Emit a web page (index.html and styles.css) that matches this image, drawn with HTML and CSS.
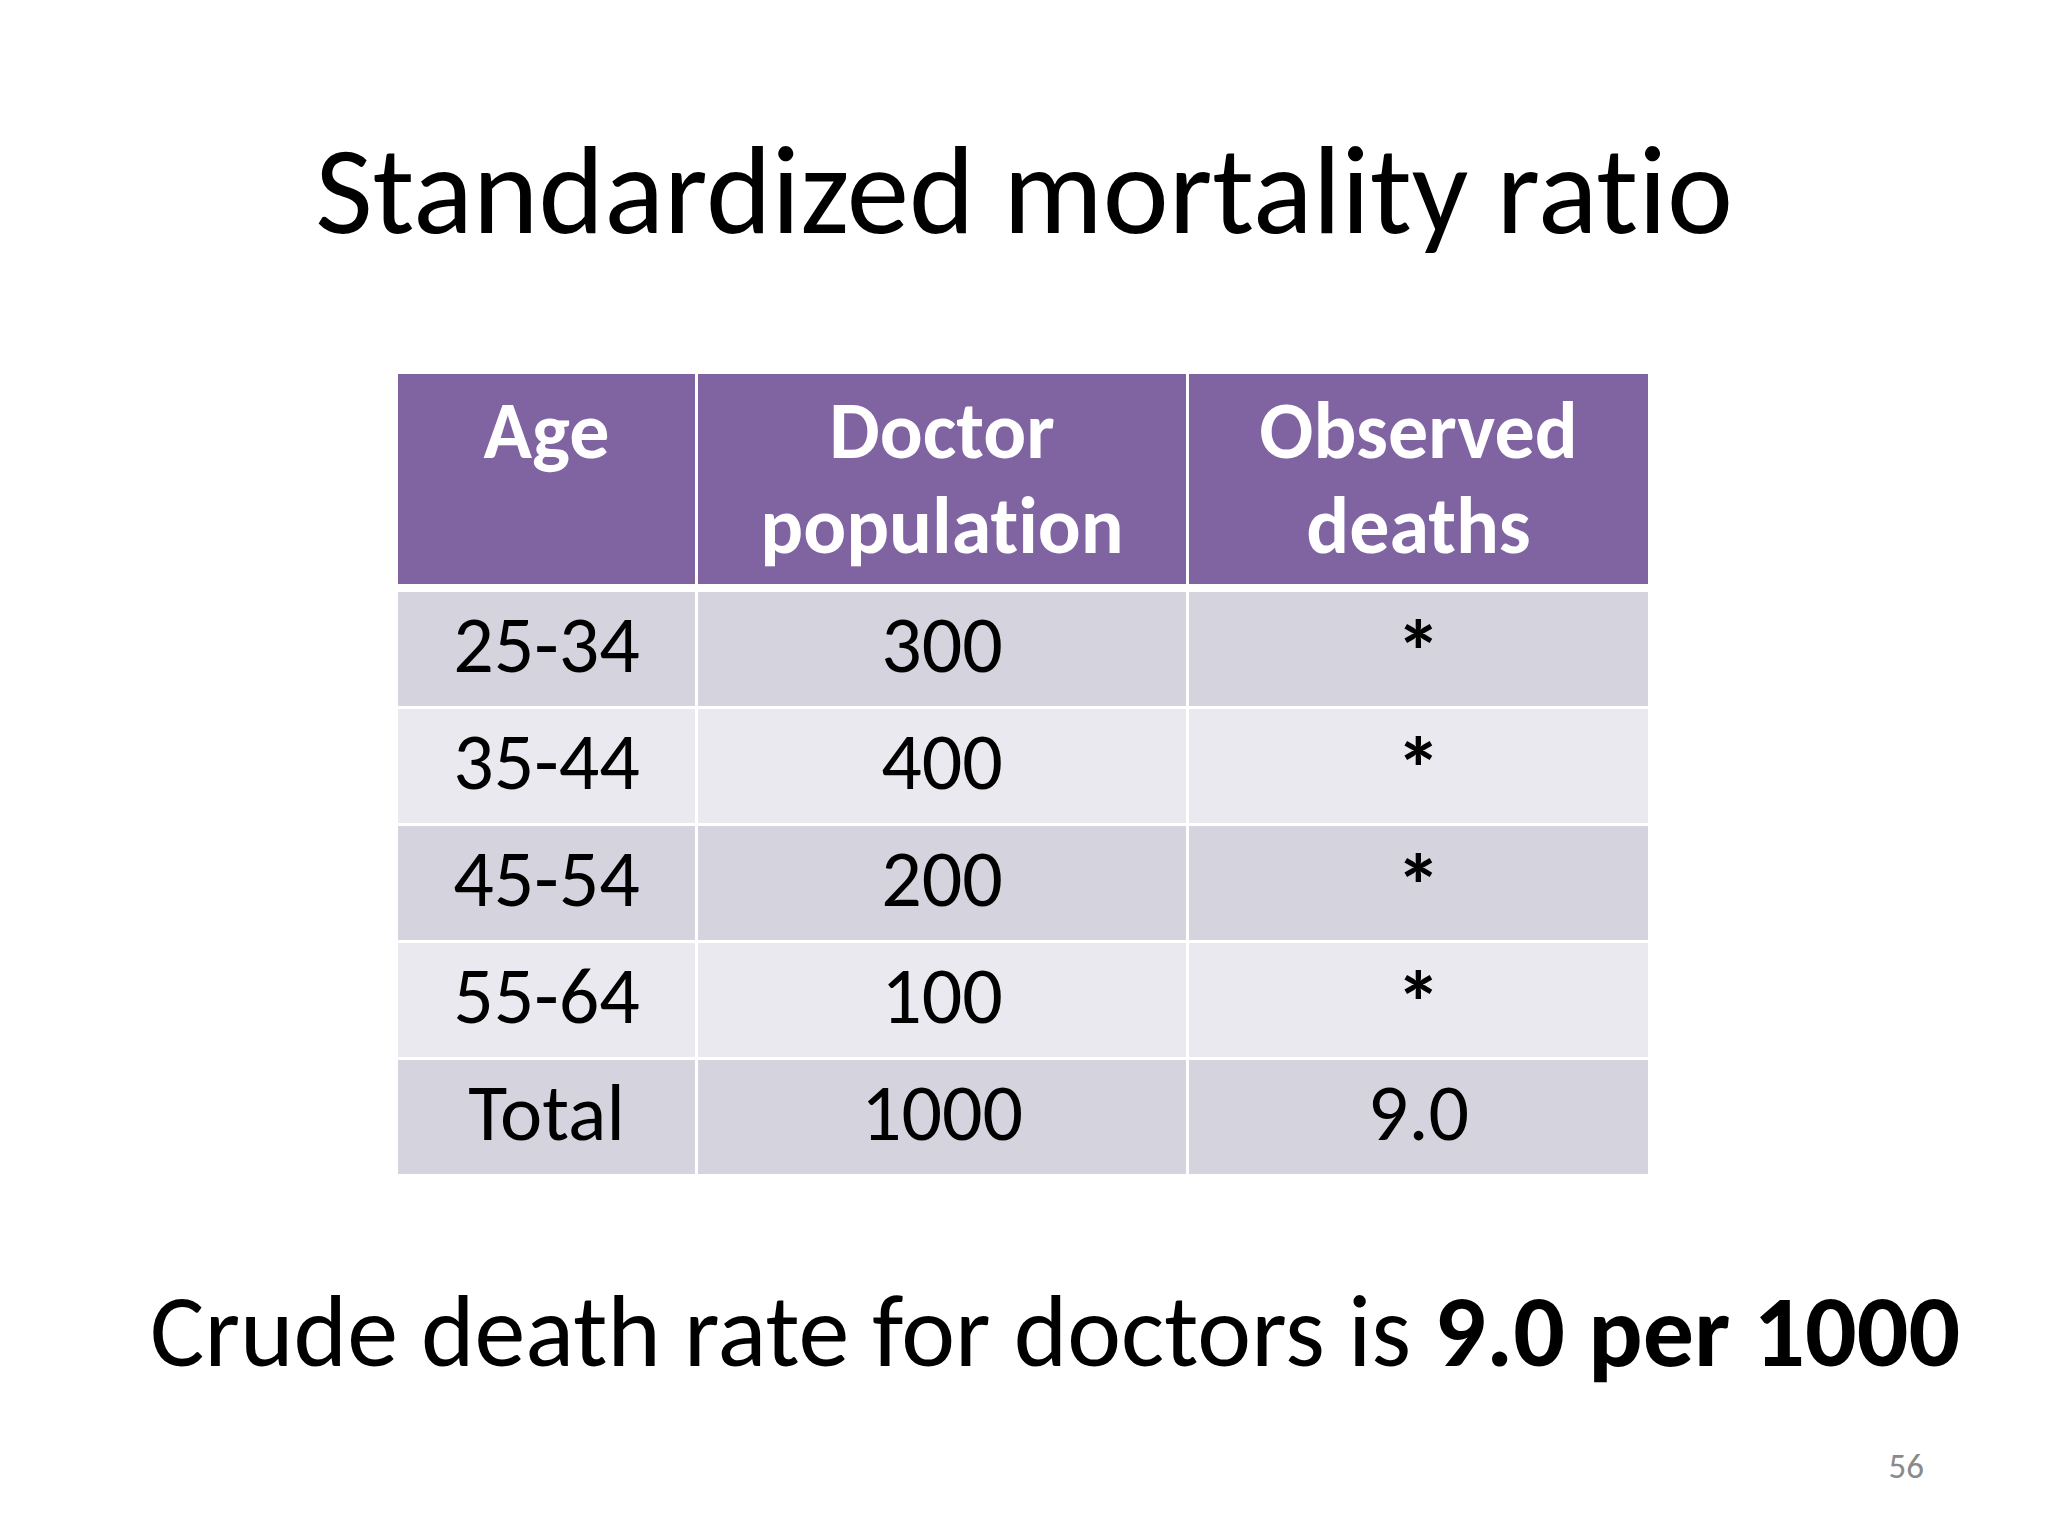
FILE: index.html
```html
<!DOCTYPE html>
<html lang="en">
<head>
<meta charset="utf-8">
<title>Standardized mortality ratio</title>
<link rel="stylesheet" href="styles.css">
</head>
<body>
<div class="slide">
  <h1 class="title">Standardized mortality ratio</h1>
  <div class="table">
    <div class="cell head">Age</div>
    <div class="cell head">Doctor<br>population</div>
    <div class="cell head">Observed<br>deaths</div>

    <div class="cell dark">25-34</div>
    <div class="cell dark">300</div>
    <div class="cell dark"><span class="star">*</span></div>

    <div class="cell light">35-44</div>
    <div class="cell light">400</div>
    <div class="cell light"><span class="star">*</span></div>

    <div class="cell dark">45-54</div>
    <div class="cell dark">200</div>
    <div class="cell dark"><span class="star">*</span></div>

    <div class="cell light">55-64</div>
    <div class="cell light">100</div>
    <div class="cell light"><span class="star">*</span></div>

    <div class="cell dark">Total</div>
    <div class="cell dark">1000</div>
    <div class="cell dark">9.0</div>
  </div>
  <p class="caption">Crude death rate for doctors is <b>9.0 per 1000</b></p>
  <div class="footer"><span class="page">56</span></div>
</div>
</body>
</html>
```
FILE: styles.css
```css
html, body {
  margin: 0;
  padding: 0;
  background: #ffffff;
}

.slide {
  width: 2048px;
  height: 1536px;
  box-sizing: border-box;
  display: flex;
  flex-direction: column;
  padding-top: 116px;
  font-family: Carlito, Calibri, Lato, "Liberation Sans", sans-serif;
  font-variant-ligatures: none;
  font-feature-settings: "liga" 0, "clig" 0;
  color: #000000;
  overflow: hidden;
}

.title {
  margin: 0;
  font-size: 125px;
  line-height: 150px;
  font-weight: normal;
  text-align: center;
}

.table {
  margin: 108px 0 0 398px;
  display: grid;
  grid-template-columns: 297px 488px 459px;
  grid-template-rows: 215px repeat(5, 114px);
  column-gap: 3px;
  row-gap: 3px;
  width: max-content;
}

.cell {
  box-sizing: border-box;
  text-align: center;
  font-size: 80px;
  line-height: 95px;
  padding-top: 5px;
}

.head {
  align-self: start;
  height: 210px;
  background: #8064a2;
  color: #ffffff;
  font-weight: bold;
  padding-top: 9px;
}

.dark {
  background: #d5d4de;
}

.light {
  background: #eae9ef;
}

.star {
  font-weight: bold;
  font-size: 90px;
  vertical-align: -11px;
}

.caption {
  margin: 96px 0 0 150px;
  font-size: 102px;
  line-height: 122px;
  white-space: nowrap;
}

.caption b {
  font-weight: bold;
}

.footer {
  display: flex;
  justify-content: flex-end;
  padding-right: 124px;
  margin-top: 54px;
}

.page {
  font-size: 35px;
  line-height: 40px;
  color: #8a8a8a;
}
```
